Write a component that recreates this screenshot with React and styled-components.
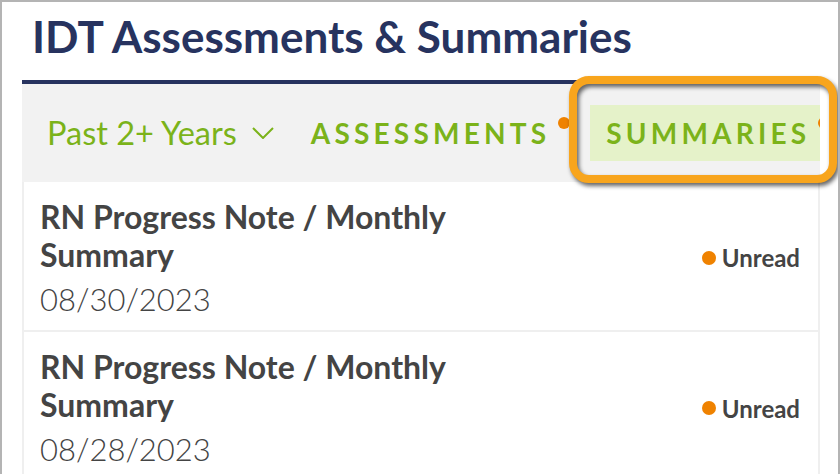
import React from 'react';
import styled, {createGlobalStyle} from 'styled-components';

const GlobalStyle = createGlobalStyle`
  body {
    margin: 0;
    background: #fff;
    font-family: Lato, 'Noto Sans', sans-serif;
  }
`;

const Frame = styled.div`
  position: relative;
  width: 840px;
  height: 474px;
  overflow: hidden;
  box-sizing: border-box;
  border-top: 2px solid #b4b4b4;
  border-left: 2px solid #b4b4b4;
  border-right: 2px solid #b4b4b4;
  padding: 0 18px 0 20px;
  background: #fff;
`;

const Title = styled.h1`
  margin: 8px 0 0;
  padding: 0 0 17px 10px;
  font-size: 44px;
  font-weight: 700;
  line-height: 1.2;
  color: #27335f;
  border-bottom: 4px solid #27335f;
`;

const FilterBar = styled.div`
  display: flex;
  align-items: center;
  height: 98px;
  padding-left: 25px;
  background: #f2f2f2;
  overflow: hidden;
`;

const RangeSelect = styled.div`
  display: flex;
  align-items: center;
  flex-shrink: 0;
  gap: 15px;
  font-size: 32.5px;
  color: #7bb31a;
  margin-right: 21px;
`;

const Tabs = styled.div`
  display: flex;
  align-items: center;
  gap: 30px;
  flex-shrink: 0;
`;

const Tab = styled.div`
  display: flex;
  align-items: center;
  flex-shrink: 0;
  height: 56px;
  padding: 0 10px 0 16px;
  background: ${props => (props.active ? '#e5f2c9' : 'transparent')};
  font-size: 28px;
  font-weight: 700;
  letter-spacing: 4.2px;
  color: #7bb31a;
`;

const TabLabel = styled.span`
  position: relative;
`;

const TabDot = styled.span`
  position: absolute;
  left: calc(100% + 7.5px);
  top: 1px;
  width: 12px;
  height: 12px;
  border-radius: 50%;
  background: #ef8200;
`;

const List = styled.div`
  border-left: 2px solid #efefef;
  border-right: 2px solid #efefef;
  background: #fff;
`;

const Row = styled.div`
  display: flex;
  align-items: center;
  justify-content: space-between;
  padding: 16px 18px 12px 16px;
  border-bottom: 2px solid #efefef;
`;

const RowText = styled.div`
  max-width: 460px;
`;

const RowTitle = styled.div`
  font-size: 32px;
  font-weight: 700;
  line-height: 38px;
  color: #444;
`;

const RowDate = styled.div`
  margin-top: 7px;
  font-size: 31px;
  font-weight: 300;
  line-height: 1.2;
  color: #444;
`;

const Status = styled.div`
  display: flex;
  align-items: center;
  gap: 6px;
  font-size: 24px;
  font-weight: 700;
  color: #444;
`;

const StatusDot = styled.span`
  width: 14px;
  height: 14px;
  border-radius: 50%;
  background: #ef8200;
`;

const Callout = styled.div`
  position: absolute;
  left: 567px;
  top: 74px;
  width: 268px;
  height: 107px;
  box-sizing: border-box;
  border: 8px solid #f8a51d;
  border-radius: 20px;
  filter: drop-shadow(2px 3px 2px rgba(0, 0, 0, 0.6));
  pointer-events: none;
`;

const Chevron = () => (
  <svg width="22" height="12" viewBox="0 0 22 12">
    <polyline points="1,1 11,11 21,1" fill="none" stroke="#7bb31a" strokeWidth="2" />
  </svg>
);

const tabs = [
  {label: 'ASSESSMENTS', active: false},
  {label: 'SUMMARIES', active: true},
];

const notes = [
  {title: 'RN Progress Note / Monthly Summary', date: '08/30/2023'},
  {title: 'RN Progress Note / Monthly Summary', date: '08/28/2023'},
];

export default function App() {
  return (
    <>
      <GlobalStyle />
      <Frame>
        <Title>IDT Assessments &amp; Summaries</Title>
        <FilterBar>
          <RangeSelect>
            Past 2+ Years
            <Chevron />
          </RangeSelect>
          <Tabs>
            {tabs.map(tab => (
              <Tab key={tab.label} active={tab.active}>
                <TabLabel>
                  {tab.label}
                  <TabDot />
                </TabLabel>
              </Tab>
            ))}
          </Tabs>
        </FilterBar>
        <List>
          {notes.map(note => (
            <Row key={note.date}>
              <RowText>
                <RowTitle>{note.title}</RowTitle>
                <RowDate>{note.date}</RowDate>
              </RowText>
              <Status>
                <StatusDot />
                Unread
              </Status>
            </Row>
          ))}
        </List>
        <Callout />
      </Frame>
    </>
  );
}
